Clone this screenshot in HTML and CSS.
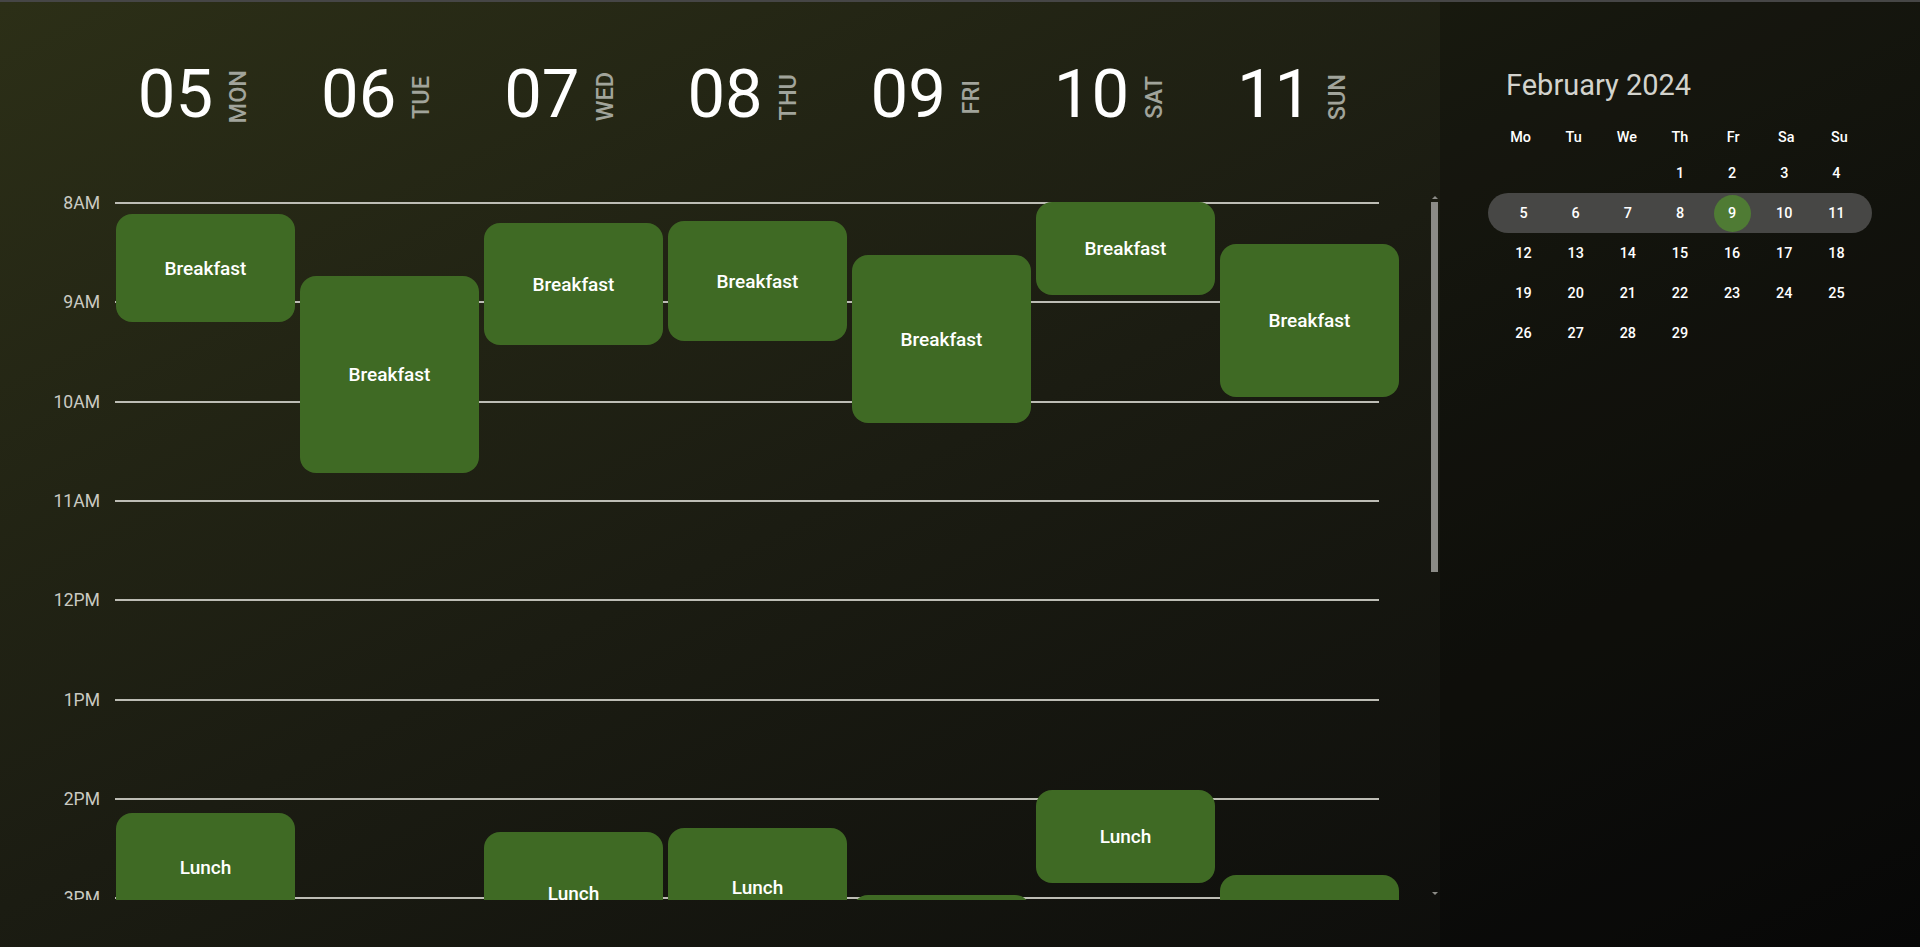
FILE: index.html
```html
<!DOCTYPE html>
<html lang="en">
<head>
<meta charset="utf-8">
<title>Week planner</title>
<link rel="stylesheet" href="styles.css">
</head>
<body>
<div class="app">
  <main class="main">
    <div class="week-head">
      <div class="day-head"><span class="dnum">05</span><span class="dname">MON</span></div>
      <div class="day-head"><span class="dnum">06</span><span class="dname">TUE</span></div>
      <div class="day-head"><span class="dnum">07</span><span class="dname">WED</span></div>
      <div class="day-head"><span class="dnum">08</span><span class="dname">THU</span></div>
      <div class="day-head"><span class="dnum">09</span><span class="dname">FRI</span></div>
      <div class="day-head"><span class="dnum">10</span><span class="dname">SAT</span></div>
      <div class="day-head"><span class="dnum">11</span><span class="dname">SUN</span></div>
    </div>
    <div class="tl-wrap">
      <div class="timeline">
        <div class="tl-inner">
          <div class="hour"><span class="hour-label">8AM</span><span class="hour-line"></span></div>
          <div class="hour"><span class="hour-label">9AM</span><span class="hour-line"></span></div>
          <div class="hour"><span class="hour-label">10AM</span><span class="hour-line"></span></div>
          <div class="hour"><span class="hour-label">11AM</span><span class="hour-line"></span></div>
          <div class="hour"><span class="hour-label">12PM</span><span class="hour-line"></span></div>
          <div class="hour"><span class="hour-label">1PM</span><span class="hour-line"></span></div>
          <div class="hour"><span class="hour-label">2PM</span><span class="hour-line"></span></div>
          <div class="hour"><span class="hour-label">3PM</span><span class="hour-line"></span></div>
          <div class="hour"><span class="hour-label">4PM</span><span class="hour-line"></span></div>
          <div class="hour"><span class="hour-label">5PM</span><span class="hour-line"></span></div>
          <div class="hour"><span class="hour-label">6PM</span><span class="hour-line"></span></div>
          <div class="hour"><span class="hour-label">7PM</span><span class="hour-line"></span></div>
          <div class="hour"><span class="hour-label">8PM</span><span class="hour-line"></span></div>

          <div class="events">
            <div class="day-col">
              <div class="event" style="top:12px;height:108px">Breakfast</div>
              <div class="event" style="top:611px;height:108px">Lunch</div>
              <div class="event" style="top:1060px;height:110px">Dinner</div>
            </div>
            <div class="day-col">
              <div class="event" style="top:74px;height:197px">Breakfast</div>
              <div class="event" style="top:745px;height:120px">Lunch</div>
              <div class="event" style="top:1080px;height:120px">Dinner</div>
            </div>
            <div class="day-col">
              <div class="event" style="top:21px;height:122px">Breakfast</div>
              <div class="event" style="top:630px;height:122px">Lunch</div>
              <div class="event" style="top:1050px;height:115px">Dinner</div>
            </div>
            <div class="day-col">
              <div class="event" style="top:19px;height:120px">Breakfast</div>
              <div class="event" style="top:626px;height:118px">Lunch</div>
              <div class="event" style="top:1070px;height:110px">Dinner</div>
            </div>
            <div class="day-col">
              <div class="event" style="top:53px;height:168px">Breakfast</div>
              <div class="event" style="top:693px;height:130px">Lunch</div>
              <div class="event" style="top:1090px;height:120px">Dinner</div>
            </div>
            <div class="day-col">
              <div class="event" style="top:0px;height:93px">Breakfast</div>
              <div class="event" style="top:588px;height:93px">Lunch</div>
              <div class="event" style="top:1040px;height:120px">Dinner</div>
            </div>
            <div class="day-col">
              <div class="event" style="top:42px;height:153px">Breakfast</div>
              <div class="event" style="top:673px;height:140px">Lunch</div>
              <div class="event" style="top:1075px;height:115px">Dinner</div>
            </div>
          </div>
        </div>
      </div>
      <div class="vscroll" aria-hidden="true">
        <span class="sb-up"></span>
        <span class="sb-thumb"></span>
        <span class="sb-space"></span>
        <span class="sb-down"></span>
      </div>
    </div>
  </main>

  <aside class="sidebar">
    <div class="cal-title">February 2024</div>
    <div class="cal-head">
      <span>Mo</span><span>Tu</span><span>We</span><span>Th</span><span>Fr</span><span>Sa</span><span>Su</span>
    </div>
    <div class="cal-row">
      <span></span><span></span><span></span><span>1</span><span>2</span><span>3</span><span>4</span>
    </div>
    <div class="cal-row week">
      <span>5</span><span>6</span><span>7</span><span>8</span><span class="sel">9</span><span>10</span><span>11</span>
    </div>
    <div class="cal-row">
      <span>12</span><span>13</span><span>14</span><span>15</span><span>16</span><span>17</span><span>18</span>
    </div>
    <div class="cal-row">
      <span>19</span><span>20</span><span>21</span><span>22</span><span>23</span><span>24</span><span>25</span>
    </div>
    <div class="cal-row">
      <span>26</span><span>27</span><span>28</span><span>29</span><span></span><span></span><span></span>
    </div>
  </aside>
</div>
</body>
</html>
```

FILE: styles.css
```css
* {
  box-sizing: border-box;
  margin: 0;
  padding: 0;
}

html, body {
  height: 100%;
}

body {
  font-family: Roboto, "Liberation Sans", sans-serif;
  color: #ffffff;
  background: #0a0a0a;
  overflow: hidden;
}

.app {
  height: 947px;
  border-top: 2px solid #464646;
  display: flex;
  background: linear-gradient(to bottom right, #2c2f17 0%, #1b1c12 48%, #0a0a0a 100%);
}

/* ---------- main week area ---------- */
.main {
  width: 1440px;
  flex: none;
  display: flex;
  flex-direction: column;
}

.week-head {
  display: grid;
  grid-template-columns: repeat(7, 183.2px);
  padding: 59px 0 0 102.4px;
}

.day-head {
  display: flex;
  justify-content: center;
  align-items: center;
  gap: 14px;
  height: 67px;
}

.dnum {
  font-size: 67px;
  line-height: 67px;
  font-weight: 400;
  color: #ffffff;
}

.dname {
  writing-mode: vertical-rl;
  transform: rotate(180deg);
  font-size: 23.5px;
  line-height: 23px;
  font-weight: 500;
  color: #a1a49b;
  margin-top: 5px;
}

.tl-wrap {
  margin-top: 64px;
  height: 708px;
  display: flex;
}

.timeline {
  flex: 1;
  overflow-y: auto;
  scrollbar-width: none;
}

.vscroll {
  width: 11px;
  flex: none;
  display: flex;
  flex-direction: column;
  align-items: center;
  padding: 4px 0 5px;
}

.sb-up,
.sb-down {
  width: 0;
  height: 0;
  border-left: 3px solid transparent;
  border-right: 3px solid transparent;
}

.sb-up {
  border-bottom: 3px solid #8c8c87;
  margin-bottom: 3px;
}

.sb-down {
  border-top: 3px solid #8c8c87;
}

.sb-thumb {
  width: 7px;
  height: 370px;
  background: #8c8c87;
}

.sb-space {
  flex: 1;
}

.tl-inner {
  position: relative;
  padding: 10px 0 10px;
}

.hour {
  height: 99.33px;
  display: flex;
  align-items: flex-start;
}

.hour-label {
  width: 100px;
  text-align: right;
  font-size: 17.6px;
  line-height: 20px;
  margin-top: -9px;
  color: #cacac2;
}

.hour-line {
  margin-left: 15px;
  width: 1264px;
  height: 2px;
  background: #bdbdb5;
}

.events {
  position: absolute;
  top: 10px;
  bottom: 10px;
  left: 116px;
  width: 1288px;
  display: grid;
  grid-template-columns: repeat(7, 184px);
}

.day-col {
  position: relative;
}

.event {
  position: absolute;
  left: 0;
  width: 179px;
  background: #3f6a24;
  border-radius: 16px;
  display: flex;
  align-items: center;
  justify-content: center;
  font-size: 19px;
  font-weight: 500;
  color: #ffffff;
}

/* ---------- sidebar calendar ---------- */
.sidebar {
  flex: 1;
  background: rgba(0, 0, 0, 0.22);
  padding: 67px 0 0 48px;
}

.cal-title {
  font-size: 29px;
  line-height: 33px;
  color: #d3d3cd;
  padding-left: 18px;
}

.cal-head {
  margin-top: 19px;
  width: 384px;
  height: 32px;
  padding: 0 6px;
  display: grid;
  grid-template-columns: repeat(7, 1fr);
  align-items: center;
  text-align: center;
  font-size: 14.4px;
  font-weight: 500;
}

.cal-row {
  width: 384px;
  height: 40px;
  padding: 0 17px;
  display: flex;
  justify-content: space-between;
  align-items: center;
}

.cal-row span {
  width: 37px;
  height: 37px;
  border-radius: 50%;
  display: flex;
  align-items: center;
  justify-content: center;
  font-size: 14.4px;
  font-weight: 500;
}

.cal-row.week {
  background: #474745;
  border-radius: 20px;
}

.cal-row .sel {
  background: #4f7b34;
}
```
